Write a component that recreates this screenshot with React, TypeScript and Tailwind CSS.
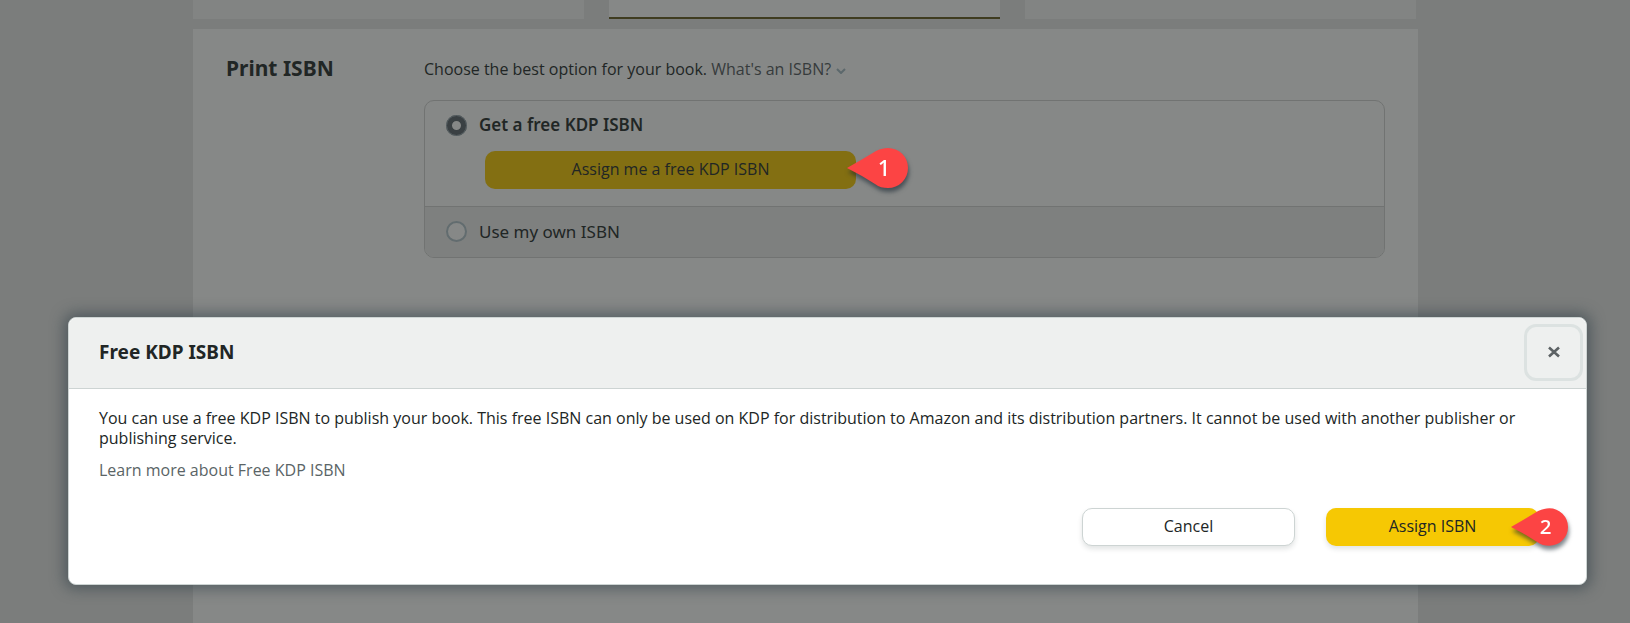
function Marker({ label, className }: { label: string; className: string }) {
  return (
    <svg viewBox="0 0 61 40" className={`pointer-events-none absolute overflow-visible drop-shadow-[1px_4px_2px_rgba(20,35,45,0.55)] ${className}`} aria-hidden="true">
      <path d="M0 20 Q16 11 29 3 C34 0.800 37 0 41 0 A20 20 0 0 1 41 40 C36 40 32 39 28 36 Q14 27 0 20 Z" fill="#fc4444" />
      <text x="37" y="28" textAnchor="middle" fontSize="22" fontWeight="500" fontFamily="'Noto Sans', sans-serif" fill="#fff">{label}</text>
    </svg>
  );
}

export default function App() {
  return (
    <div className="relative min-h-screen overflow-hidden bg-[#7b7d7c] font-['Open_Sans',sans-serif] text-base leading-5 text-[#212625]">
      <main className="mr-[212px] ml-[193px] flex min-h-screen flex-col">
        <div className="mr-[2px] mb-[10px] grid h-[19px] grid-cols-3 gap-[25px]">
          <div className="bg-[#828483]" />
          <div className="border-b-2 border-[#3f3c20] bg-[#868887]" />
          <div className="bg-[#828483]" />
        </div>
        <section className="flex flex-1 items-start bg-[#868887] pt-[30px] pr-[33px] pl-[33px]">
          <h1 className="w-[198px] shrink-0 font-['Noto_Sans',sans-serif] text-[21px] leading-[18px] font-bold">Print ISBN</h1>
          <div className="min-w-0 flex-1">
            <p className="mb-[21px]">
              Choose the best option for your book.{" "}
              <a href="#isbn" className="text-[#363b3c]">
                What's an ISBN?
                <svg viewBox="0 0 10 6" className="ml-[5px] inline h-[6px] w-[10px] align-middle" fill="none" stroke="#5c686c" strokeWidth="2" aria-hidden="true">
                  <path d="M1 1l4 4 4-4" />
                </svg>
              </a>
            </p>
            <div className="overflow-hidden rounded-[10px] border border-[#717372]">
              <div className="px-[21px] pt-[14px] pb-[17px]">
                <label className="flex h-[20px] items-center gap-3 font-['Noto_Sans',sans-serif] text-[17px] font-semibold">
                  <input type="radio" name="isbn" defaultChecked className="size-[21px] appearance-none rounded-full border-[6px] border-[#3a4043] bg-[#868887] outline-1 -outline-offset-1 outline-[#5b6467]" />
                  Get a free KDP ISBN
                </label>
                <div className="relative mt-[16px] ml-[39px] w-[371px]">
                  <button className="h-[38px] w-full rounded-[10px] bg-[#836f12] pb-[2px]">Assign me a free KDP ISBN</button>
                  <Marker label="1" className="-top-[3px] -right-[52px] h-[40px] w-[61px]" />
                </div>
              </div>
              <div className="border-t border-[#717372] bg-[#7e807f] px-[21px] pt-[14px] pb-[15px]">
                <label className="flex h-[21px] items-center gap-3 font-['Noto_Sans',sans-serif] text-[17px]">
                  <input type="radio" name="isbn" className="size-[21px] appearance-none rounded-full border-2 border-[#626c6f] bg-[#868887]" />
                  Use my own ISBN
                </label>
              </div>
            </div>
          </div>
        </section>
      </main>

      <div role="dialog" aria-labelledby="dialog-title" className="absolute top-[317px] right-[43px] left-[68px] rounded-lg border border-[#cdd4d3] bg-white shadow-[0_0_14px_4px_rgba(40,55,65,0.5)]">
        <header className="flex h-[71px] items-center justify-between rounded-t-lg border-b border-[#cdd4d3] bg-[#eef0ef] pr-[3px] pb-[2px] pl-[30px]">
          <h2 id="dialog-title" className="font-['Noto_Sans',sans-serif] text-[19px] leading-6 font-bold">Free KDP ISBN</h2>
          <button aria-label="Close" className="flex h-[57px] w-[59px] items-center justify-center rounded-xl border-[3px] border-[#dce2e1]">
            <svg viewBox="0 0 12 12" className="size-3" stroke="#5c6264" strokeWidth="2.600" aria-hidden="true">
              <path d="M1 1.500l10 9M11 1.500l-10 9" />
            </svg>
          </button>
        </header>
        <div className="px-[30px] pt-[19px] pb-[38px]">
          <p>
            You can use a free KDP ISBN to publish your book. This free ISBN can only be used on KDP for distribution to Amazon and its distribution partners. It cannot be used with another publisher or publishing service.
          </p>
          <p className="mt-3">
            <a href="#learn" className="text-[#5a6466]">Learn more about Free KDP ISBN</a>
          </p>
          <div className="mt-[28px] flex justify-end gap-[31px] pr-[17px]">
            <button className="h-[38px] w-[213px] rounded-[10px] border border-[#cdd4d3] bg-white pb-[2px] shadow-[0_3px_5px_rgba(30,50,50,0.13)]">Cancel</button>
            <div className="relative w-[213px]">
              <button className="h-[38px] w-full rounded-[10px] bg-[#f6c803] pb-[2px] shadow-[0_3px_5px_rgba(30,50,50,0.13)]">Assign ISBN</button>
              <Marker label="2" className="top-0 -right-[29px] h-[38px] w-[57px]" />
            </div>
          </div>
        </div>
      </div>
    </div>
  );
}
